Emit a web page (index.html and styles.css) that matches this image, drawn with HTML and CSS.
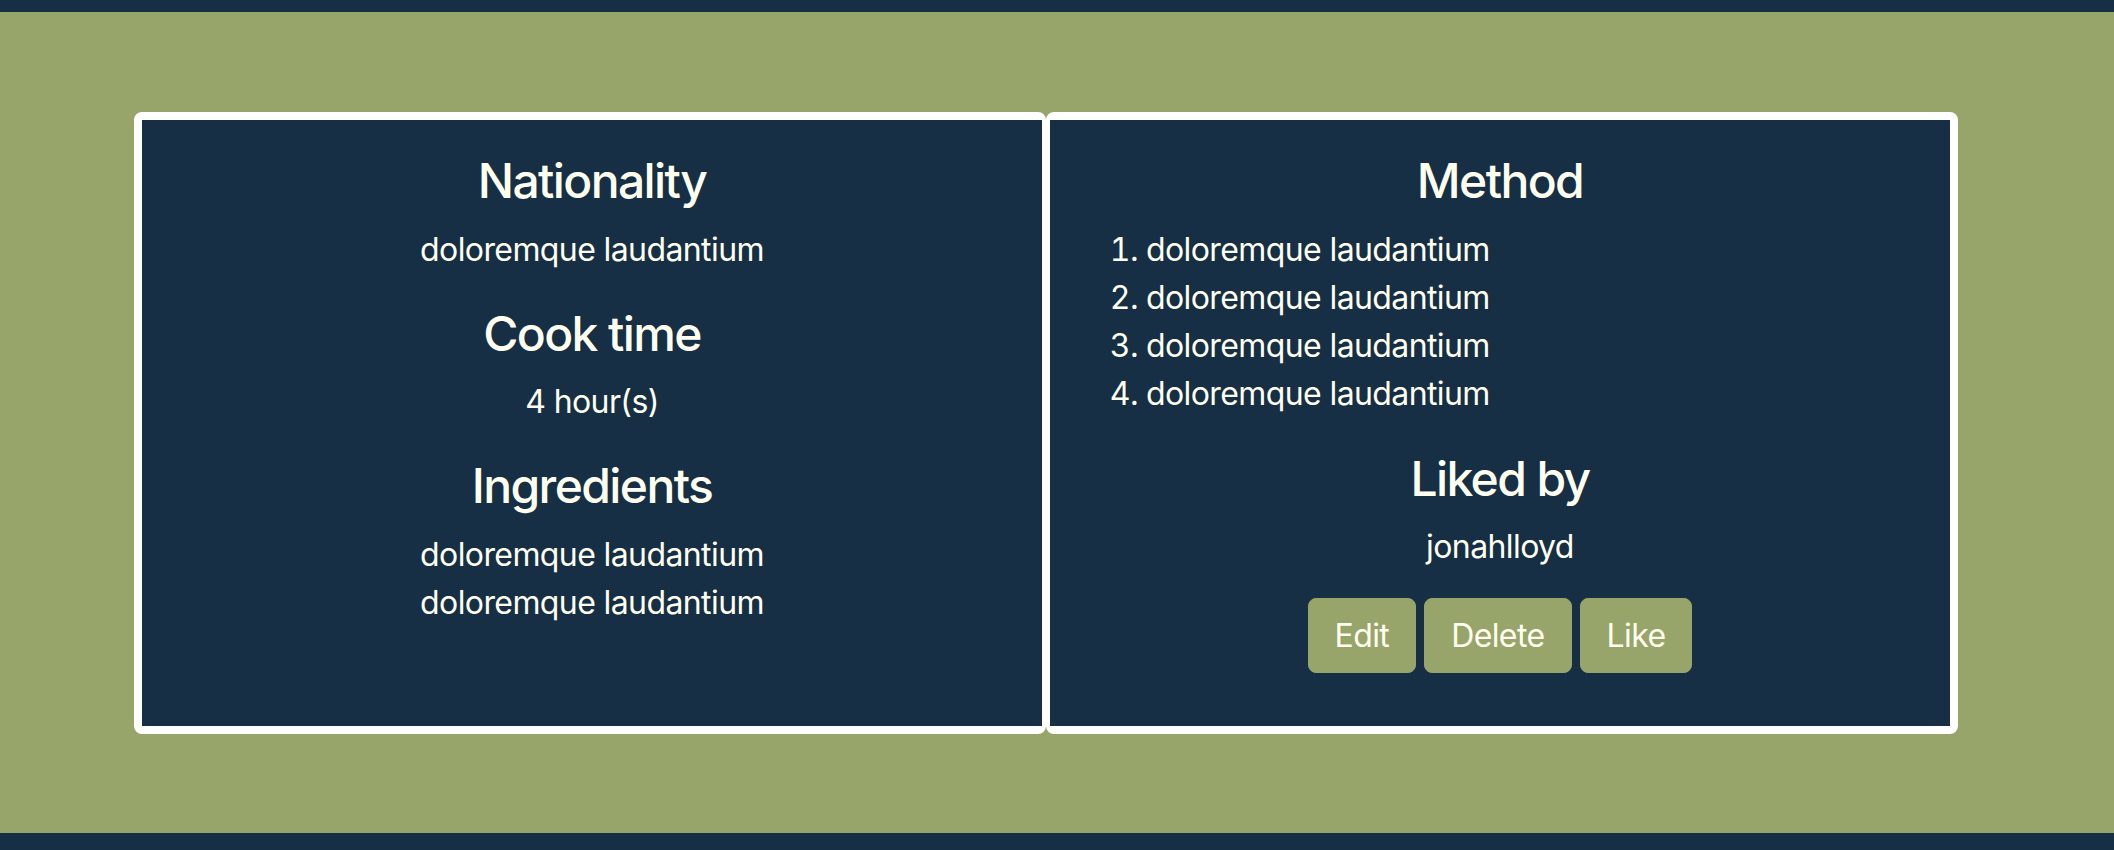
FILE: index.html
```html
<!DOCTYPE html>
<html lang="en">
<head>
<meta charset="utf-8">
<title>Recipe</title>
<link rel="stylesheet" href="styles.css">
</head>
<body>
<header class="topbar"></header>
<main class="page">
  <div class="cards">
    <section class="card card-left">
      <h4 class="title">Nationality</h4>
      <p class="text">doloremque laudantium</p>
      <h4 class="title">Cook time</h4>
      <p class="text">4 hour(s)</p>
      <h4 class="title">Ingredients</h4>
      <ul class="plain-list">
        <li>doloremque laudantium</li>
        <li>doloremque laudantium</li>
      </ul>
    </section>
    <section class="card card-right">
      <h4 class="title">Method</h4>
      <ol class="steps">
        <li>doloremque laudantium</li>
        <li>doloremque laudantium</li>
        <li>doloremque laudantium</li>
        <li>doloremque laudantium</li>
      </ol>
      <h4 class="title">Liked by</h4>
      <p class="text liked">jonahlloyd</p>
      <div class="actions">
        <button class="btn" type="button">Edit</button>
        <button class="btn" type="button">Delete</button>
        <button class="btn" type="button">Like</button>
      </div>
    </section>
  </div>
</main>
<footer class="bottombar"></footer>
</body>
</html>
```

FILE: styles.css
```css
* { box-sizing: border-box; }

html, body {
  margin: 0;
  padding: 0;
}

body {
  font-family: Inter, "Noto Sans", "Liberation Sans", sans-serif;
  font-size: 32px;
  line-height: 48px;
  letter-spacing: -0.6px;
  color: #fffff0;
  background: #97a56b;
  overflow: hidden;
}

.topbar {
  height: 12px;
  background: #162f45;
}

.bottombar {
  height: 17px;
  background: #162f45;
}

.page {
  height: 821px;
  padding: 100px 156px 0 134px;
  background: #97a56b;
}

.cards {
  display: flex;
  align-items: stretch;
}

.card {
  flex: 1 1 0;
  background: #162f45;
  border: 8px solid #ffffff;
  border-radius: 8px;
  padding: 32px;
}

.card-left {
  border-right-width: 4px;
  text-align: center;
}

.card-right {
  border-left-width: 4px;
}

.title {
  margin: 0 0 16px;
  font-size: 48px;
  line-height: 57.6px;
  font-weight: 500;
  text-align: center;
  letter-spacing: -1.6px;
}

.text {
  margin: 0 0 31px;
  text-align: center;
}

.plain-list {
  list-style: none;
  margin: 0;
  padding: 0;
}

.steps {
  margin: 0 0 32px;
  padding-left: 64px;
}

.liked {
  margin-bottom: 27px;
}

.actions {
  display: flex;
  justify-content: center;
  gap: 8px;
  margin-bottom: 21px;
}

.btn {
  font-family: inherit;
  font-size: 32px;
  line-height: 48px;
  letter-spacing: -0.6px;
  color: #fffff0;
  background: #97a56b;
  border: 1px solid #97a56b;
  border-radius: 8px;
  padding: 12.5px 26px;
  cursor: pointer;
}
```
